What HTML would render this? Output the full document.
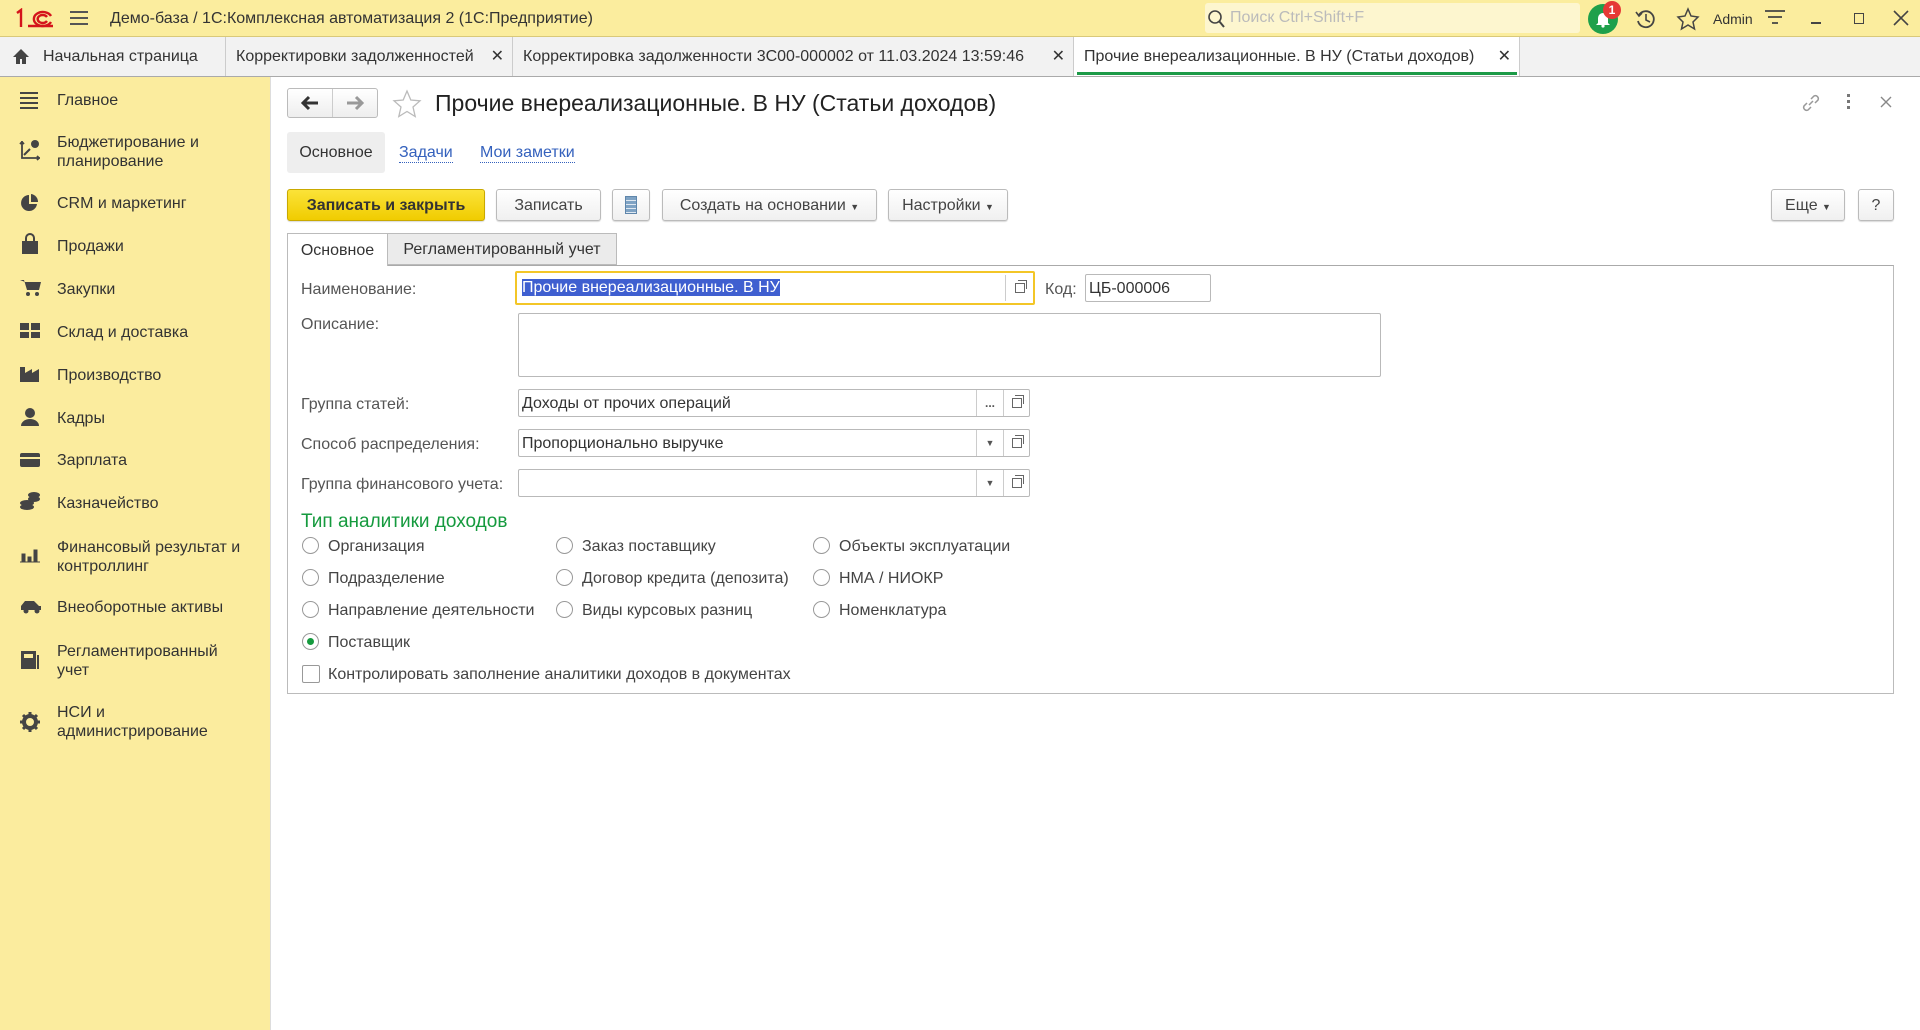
<!DOCTYPE html>
<html><head><meta charset="utf-8">
<style>
*{box-sizing:border-box;margin:0;padding:0}
body{width:1920px;height:1030px;overflow:hidden;background:#fff;font-family:"Liberation Sans",Arial,sans-serif;font-size:16px;color:#333;position:relative}
.a{position:absolute}
#top{left:0;top:0;width:1920px;height:37px;background:#fbed9e;border-bottom:1px solid #d9c97a}
#tabs{left:0;top:37px;width:1920px;height:40px;background:#f2f2f2;border-bottom:1px solid #aaa}
.tab{position:absolute;top:0;height:39px;line-height:40px;padding:0 10px;border-right:1px solid #ccc;font-size:16px;color:#333;white-space:nowrap}
.tab b{position:absolute;right:8px;top:0;font-weight:normal}
#side{left:0;top:77px;width:271px;height:953px;background:#fbec9e;border-right:1px solid #ddd}
.si{position:absolute;left:57px;font-size:16px;line-height:19px;color:#333}
.si2{position:absolute;left:19px}
.btn{position:absolute;top:189px;height:32px;border:1px solid #bbb;border-radius:3px;background:linear-gradient(#fff,#f0f0f0);text-align:center;line-height:31px;font-size:16px;color:#444;box-shadow:0 1px 1px rgba(0,0,0,.15)}
.lbl{position:absolute;left:301px;font-size:16px;color:#555}
.inp{position:absolute;border:1px solid #b9b9b9;border-radius:2px;background:#fff;height:28px;line-height:28px;padding-left:3px;font-size:16px;color:#333}
.sb{position:absolute;top:0;width:27px;height:26px;border-left:1px solid #ccc;text-align:center;font-size:12px;color:#555;line-height:26px}
.rad{position:absolute;width:17px;height:17px;border:1px solid #999;border-radius:50%;background:#fff}
.rt{position:absolute;font-size:16px;color:#444}
.cp{display:inline-block;width:10px;height:10px;border:1px solid #666;position:relative;margin-top:8px}
.cp:after{content:"";position:absolute;left:2px;top:-4px;width:8px;height:8px;border:1px solid #666;border-left:none;border-bottom:none}
</style></head><body>
<div id="top" class="a">
  <svg class="a" style="left:14px;top:8px" width="40" height="20" viewBox="0 0 40 20"><g fill="none" stroke="#d4141b" stroke-width="2.4"><path d="M3 5l4-3v17"/><path d="M37 8a9 7 0 1 0 0 6"/><path d="M33 9a5 4 0 1 0 0 4"/><path d="M14 18h25"/></g></svg>
  <div class="a" style="left:70px;top:11px;width:18px;height:2px;background:#555;box-shadow:0 6px 0 #555,0 12px 0 #555"></div>
  <div class="a" style="left:110px;top:10px;font-size:16px;color:#333">Демо-база / 1С:Комплексная автоматизация 2  (1С:Предприятие)</div>
  <div class="a" style="left:1205px;top:3px;width:375px;height:30px;background:#fdf6cf;border-radius:3px"></div>
  <svg class="a" style="left:1207px;top:8px" width="20" height="22"><circle cx="8" cy="9" r="6" fill="none" stroke="#444" stroke-width="1.6"/><path d="M12 13l5 6" stroke="#444" stroke-width="2"/></svg>
  <div class="a" style="left:1230px;top:9px;font-size:16px;color:#bbb">Поиск Ctrl+Shift+F</div>
  <div class="a" style="left:1588px;top:4px;width:30px;height:30px;border-radius:50%;background:#1ea04b"></div>
  <svg class="a" style="left:1594px;top:10px" width="18" height="18"><path d="M4 13V8a5 5 0 0 1 10 0v5l2 2H2z" fill="#fff"/><circle cx="9" cy="16" r="1.6" fill="#fff"/></svg>
  <div class="a" style="left:1603px;top:1px;width:18px;height:18px;border-radius:50%;background:#e53935;color:#fff;font-size:12px;text-align:center;line-height:18px;font-weight:bold">1</div>
  <svg class="a" style="left:1634px;top:7px" width="24" height="24"><path d="M5 8a8 8 0 1 1-1 6" fill="none" stroke="#444" stroke-width="1.8"/><path d="M2 5l3 4 3-3" fill="none" stroke="#444" stroke-width="1.6"/><path d="M12 7v6l4 2" fill="none" stroke="#444" stroke-width="1.6"/></svg>
  <svg class="a" style="left:1676px;top:7px" width="24" height="24"><path d="M12 2l3 7 7 1-5 5 1.5 7L12 18l-6.5 4L7 15 2 10l7-1z" fill="none" stroke="#444" stroke-width="1.5"/></svg>
  <div class="a" style="left:1713px;top:11px;font-size:14px;color:#333">Admin</div>
  <svg class="a" style="left:1764px;top:9px" width="22" height="20"><path d="M1 2h20M4 8h14M8 14h6" stroke="#444" stroke-width="1.8"/></svg>
  <div class="a" style="left:1811px;top:22px;width:10px;height:2px;background:#444"></div>
  <div class="a" style="left:1854px;top:13px;width:10px;height:11px;border:1.5px solid #444"></div>
  <svg class="a" style="left:1893px;top:10px" width="16" height="16"><path d="M1 1l14 14M15 1L1 15" stroke="#444" stroke-width="1.6"/></svg>
</div>
<div id="tabs" class="a">
  <svg class="a" style="left:12px;top:11px" width="18" height="17"><path d="M9 1L1 9h3v7h4v-5h2v5h4V9h3z" fill="#444"/></svg>
  <div class="tab" style="left:0;width:226px;padding-left:43px">Начальная страница</div>
  <div class="tab" style="left:226px;width:287px">Корректировки задолженностей<b>✕</b></div>
  <div class="tab" style="left:513px;width:561px">Корректировка задолженности 3С00-000002 от 11.03.2024 13:59:46<b>✕</b></div>
  <div class="tab" style="left:1074px;width:446px;background:#fff">Прочие внереализационные. В НУ (Статьи доходов)<b>✕</b></div>
  <div class="a" style="left:1077px;top:35px;width:440px;height:3px;background:#1c9a47"></div>
</div>
<div id="side" class="a">
  <div class="si" style="top:14px">Главное</div><div class="a" style="left:20px;top:15px;width:18px;height:2px;background:#444;box-shadow:0 5px 0 #444,0 10px 0 #444,0 15px 0 #444"></div>
  <div class="si" style="top:56px">Бюджетирование и<br>планирование</div>
  <svg class="si2" style="top:62px" width="24" height="22"><path d="M3 2v17h18M3 3l-2 2M3 3l2 2M20 19l-2-2M20 19l-2 2" stroke="#444" stroke-width="1.8" fill="none"/><circle cx="16" cy="5" r="4" fill="#444"/><path d="M5 16l6-6" stroke="#444" stroke-width="2"/></svg>
  <div class="si" style="top:117px">CRM и маркетинг</div>
  <svg class="si2" style="top:116px" width="22" height="20"><path d="M10 2a8 8 0 1 0 8 9h-8z" fill="#444"/><path d="M12 1a8 8 0 0 1 7 8h-7z" fill="#444"/></svg>
  <div class="si" style="top:160px">Продажи</div>
  <svg class="si2" style="top:156px" width="22" height="22"><path d="M3 8h16v13H3z" fill="#444"/><path d="M7 8V5a4 4 0 0 1 8 0v3" stroke="#444" stroke-width="2" fill="none"/></svg>
  <div class="si" style="top:203px">Закупки</div>
  <svg class="si2" style="top:201px" width="24" height="20"><path d="M1 2h4l3 10h12l2-8H6" fill="#444"/><circle cx="9" cy="16" r="2" fill="#444"/><circle cx="18" cy="16" r="2" fill="#444"/></svg>
  <div class="si" style="top:246px">Склад и доставка</div>
  <svg class="si2" style="top:245px" width="22" height="18"><path d="M1 1h9v7H1zM12 1h9v7h-9zM1 10h9v6H1zM12 10h9v6h-9z" fill="#444"/></svg>
  <div class="si" style="top:289px">Производство</div>
  <svg class="si2" style="top:288px" width="22" height="18"><path d="M1 17V2h5v6l7-4v4l7-4v13z" fill="#444"/></svg>
  <div class="si" style="top:332px">Кадры</div>
  <svg class="si2" style="top:330px" width="22" height="20"><circle cx="11" cy="6" r="5" fill="#444"/><path d="M2 19a9 7 0 0 1 18 0z" fill="#444"/></svg>
  <div class="si" style="top:374px">Зарплата</div>
  <svg class="si2" style="top:375px" width="22" height="16"><rect x="1" y="1" width="20" height="14" rx="2" fill="#444"/><rect x="1" y="5" width="20" height="2" fill="#fbec9e"/></svg>
  <div class="si" style="top:417px">Казначейство</div>
  <svg class="si2" style="top:414px" width="22" height="22"><g fill="#444"><ellipse cx="8" cy="16" rx="7" ry="3"/><ellipse cx="8" cy="12" rx="7" ry="3"/><ellipse cx="15" cy="8" rx="6" ry="3"/><ellipse cx="15" cy="4" rx="6" ry="3"/></g></svg>
  <div class="si" style="top:461px">Финансовый результат и<br>контроллинг</div>
  <svg class="si2" style="top:470px" width="22" height="16"><path d="M1 15h20M3 7h3v8H3zM9 10h3v5H9zM15 3h3v12h-3z" fill="#444" stroke="#444" stroke-width="1"/></svg>
  <div class="si" style="top:521px">Внеоборотные активы</div>
  <svg class="si2" style="top:521px" width="24" height="16"><path d="M2 12V8l4-5h9l5 5h2v4z" fill="#444"/><circle cx="7" cy="13" r="2.5" fill="#444"/><circle cx="18" cy="13" r="2.5" fill="#444"/></svg>
  <div class="si" style="top:565px">Регламентированный<br>учет</div>
  <svg class="si2" style="top:572px" width="22" height="22"><rect x="2" y="2" width="15" height="18" fill="#444"/><rect x="5" y="5" width="9" height="4" fill="#fbec9e"/><rect x="18" y="6" width="2" height="14" fill="#444"/></svg>
  <div class="si" style="top:626px">НСИ и<br>администрирование</div>
  <svg class="si2" style="top:634px" width="22" height="22"><circle cx="11" cy="11" r="6" fill="none" stroke="#444" stroke-width="4"/><path d="M11 1v5M11 16v5M1 11h5M16 11h5M4 4l3 3M15 15l3 3M4 18l3-3M15 7l3-3" stroke="#444" stroke-width="3"/></svg>
</div>
<!-- content -->
<div class="a" style="left:287px;top:88px;width:91px;height:30px;border:1px solid #bbb;border-radius:3px;background:linear-gradient(#fff,#eee)"></div>
<div class="a" style="left:332px;top:89px;width:1px;height:28px;background:#ccc"></div>
<svg class="a" style="left:300px;top:94px" width="20" height="18"><path d="M18 9H4M9 3L3 9l6 6" fill="none" stroke="#333" stroke-width="3"/></svg>
<svg class="a" style="left:345px;top:94px" width="20" height="18"><path d="M2 9h14M11 3l6 6-6 6" fill="none" stroke="#999" stroke-width="3"/></svg>
<svg class="a" style="left:392px;top:89px" width="30" height="30"><path d="M15 2l3.8 9 9.2.8-7 6.2 2.2 9.5L15 22.5 6.8 27.5 9 18 2 11.8l9.2-.8z" fill="none" stroke="#bbb" stroke-width="1.3"/></svg>
<div class="a" style="left:435px;top:90px;font-size:23px;color:#222">Прочие внереализационные. В НУ (Статьи доходов)</div>
<svg class="a" style="left:1800px;top:92px" width="22" height="22"><path d="M9 13l4-4M7 11l-3 3a3 3 0 0 0 4 4l3-3M15 11l3-3a3 3 0 0 0-4-4l-3 3" fill="none" stroke="#999" stroke-width="1.5"/></svg>
<div class="a" style="left:1847px;top:94px;width:3px;height:3px;background:#777;box-shadow:0 6px 0 #777,0 12px 0 #777"></div>
<svg class="a" style="left:1880px;top:96px" width="12" height="12"><path d="M1 1l10 10M11 1L1 11" stroke="#888" stroke-width="1.4"/></svg>

<div class="a" style="left:287px;top:132px;width:98px;height:41px;background:#eee;border-radius:3px;text-align:center;line-height:42px;color:#333">Основное</div>
<div class="a" style="left:399px;top:144px;color:#3461bd;border-bottom:1px dotted #3461bd;line-height:18px">Задачи</div>
<div class="a" style="left:480px;top:144px;color:#3461bd;border-bottom:1px dotted #3461bd;line-height:18px">Мои заметки</div>

<div class="btn" style="left:287px;width:198px;background:linear-gradient(#fbe339,#f0cc00);border-color:#c9a900;font-weight:bold;color:#333">Записать и закрыть</div>
<div class="btn" style="left:496px;width:105px">Записать</div>
<div class="btn" style="left:612px;width:38px"><div style="width:12px;height:18px;margin:6px auto;background:repeating-linear-gradient(#7fa3c4 0 3px,#dfe8f1 3px 4px);border:1px solid #5f86ab"></div></div>
<div class="btn" style="left:662px;width:215px">Создать на основании <span style="font-size:9px">▼</span></div>
<div class="btn" style="left:888px;width:120px">Настройки <span style="font-size:9px">▼</span></div>
<div class="btn" style="left:1771px;width:74px">Еще <span style="font-size:9px">▼</span></div>
<div class="btn" style="left:1858px;width:36px">?</div>

<div class="a" style="left:287px;top:265px;width:1607px;height:429px;border:1px solid #bbb;border-top-color:#aaa"></div>
<div class="a" style="left:287px;top:233px;width:101px;height:33px;background:#fff;border:1px solid #bbb;border-bottom:none;text-align:center;line-height:34px;color:#333">Основное</div>
<div class="a" style="left:387px;top:233px;width:230px;height:32px;background:#ebebeb;border:1px solid #bbb;text-align:center;line-height:31px;color:#333">Регламентированный учет</div>

<div class="lbl" style="top:281px">Наименование:</div>
<div class="inp" style="left:515px;top:271px;width:520px;height:34px;border:2px solid #f3c627;line-height:30px;padding-left:5px"><span style="background:#3f5fd0;color:#fff">Прочие внереализационные. В НУ</span><div class="sb" style="right:0;top:2px;width:28px;height:26px"><span class="cp"></span></div></div>
<div class="lbl" style="left:1045px;top:281px">Код:</div>
<div class="inp" style="left:1085px;top:274px;width:126px">ЦБ-000006</div>

<div class="lbl" style="top:316px">Описание:</div>
<div class="inp" style="left:518px;top:313px;width:863px;height:64px"></div>

<div class="lbl" style="top:396px">Группа статей:</div>
<div class="inp" style="left:518px;top:389px;width:512px">Доходы от прочих операций<div class="sb" style="right:26px;font-weight:bold">...</div><div class="sb" style="right:0;width:26px"><span class="cp"></span></div></div>
<div class="lbl" style="top:436px">Способ распределения:</div>
<div class="inp" style="left:518px;top:429px;width:512px">Пропорционально выручке<div class="sb" style="right:26px;font-size:9px">▼</div><div class="sb" style="right:0;width:26px"><span class="cp"></span></div></div>
<div class="lbl" style="top:476px">Группа финансового учета:</div>
<div class="inp" style="left:518px;top:469px;width:512px"><div class="sb" style="right:26px;font-size:9px">▼</div><div class="sb" style="right:0;width:26px"><span class="cp"></span></div></div>

<div class="a" style="left:301px;top:511px;font-size:19px;color:#159a3e">Тип аналитики доходов</div>

<div class="rad" style="left:302px;top:537px"></div><div class="rt" style="left:328px;top:538px">Организация</div>
<div class="rad" style="left:556px;top:537px"></div><div class="rt" style="left:582px;top:538px">Заказ поставщику</div>
<div class="rad" style="left:813px;top:537px"></div><div class="rt" style="left:839px;top:538px">Объекты эксплуатации</div>
<div class="rad" style="left:302px;top:569px"></div><div class="rt" style="left:328px;top:570px">Подразделение</div>
<div class="rad" style="left:556px;top:569px"></div><div class="rt" style="left:582px;top:570px">Договор кредита (депозита)</div>
<div class="rad" style="left:813px;top:569px"></div><div class="rt" style="left:839px;top:570px">НМА / НИОКР</div>
<div class="rad" style="left:302px;top:601px"></div><div class="rt" style="left:328px;top:602px">Направление деятельности</div>
<div class="rad" style="left:556px;top:601px"></div><div class="rt" style="left:582px;top:602px">Виды курсовых разниц</div>
<div class="rad" style="left:813px;top:601px"></div><div class="rt" style="left:839px;top:602px">Номенклатура</div>
<div class="rad" style="left:302px;top:633px"><div style="width:7px;height:7px;border-radius:50%;background:#159a3e;margin:4px"></div></div><div class="rt" style="left:328px;top:634px">Поставщик</div>
<div class="a" style="left:302px;top:665px;width:18px;height:18px;border:1px solid #999;border-radius:2px;background:#fff"></div><div class="rt" style="left:328px;top:666px">Контролировать заполнение аналитики доходов в документах</div>
</body></html>
